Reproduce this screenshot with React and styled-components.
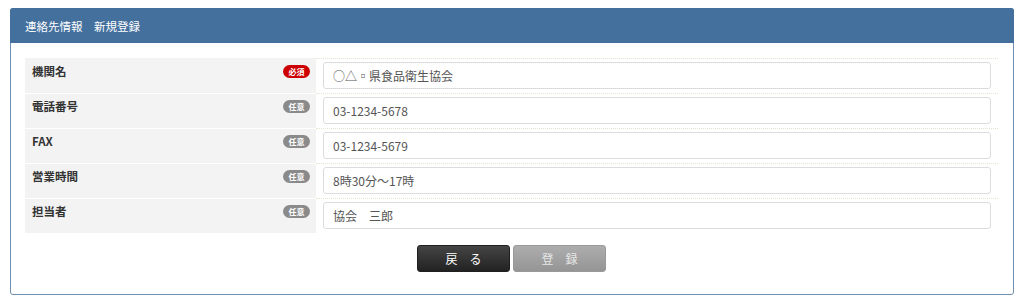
import React from 'react'
import styled, { createGlobalStyle } from 'styled-components'

const GlobalStyle = createGlobalStyle`
  body {
    margin: 0;
    background: #fff;
    font-family: "Noto Sans CJK JP", "Noto Sans", sans-serif;
    color: #333;
  }
`

const Panel = styled.section`
  margin: 8px 10px 0 10px;
  width: 1004px;
  height: 287px;
  box-sizing: border-box;
  border: 1px solid #6f8fb1;
  border-radius: 3px;
  display: flex;
  flex-direction: column;
`
const PanelHeader = styled.header`
  background: #44709e;
  color: #fff;
  font-size: 11.5px;
  height: 35px;
  display: flex;
  align-items: center;
  padding: 0 15px;
  margin: -1px -1px 0 -1px;
  border-radius: 3px 3px 0 0;
`
const PanelBody = styled.div`
  padding: 15px 15px 0 14px;
  display: flex;
  flex-direction: column;
  align-items: stretch;
`
const Table = styled.div`
  display: grid;
  grid-template-columns: 291px 1fr;
`
const LabelCell = styled.div`
  background: #f3f3f3;
  border-top: 1px solid #fff;
  height: 35px;
  box-sizing: border-box;
  padding: 4px 6px 0 7px;
  display: flex;
  align-items: flex-start;
  justify-content: space-between;
  font-size: 11.5px;
  font-weight: 700;
  color: #333;
  &:first-child {
    border-top-color: #f3f3f3;
  }
`
const Badge = styled.span`
  background: ${(p) => (p.$required ? '#cc0000' : '#8a8a8a')};
  color: #fff;
  font-size: 8px;
  font-weight: 700;
  line-height: 13px;
  height: 13px;
  width: 27px;
  text-align: center;
  border-radius: 7px;
  margin-top: 2px;
`
const InputCell = styled.div`
  border-top: 1px dotted #e4e4cf;
  height: 35px;
  box-sizing: border-box;
  padding: 3px 7px 0 7px;
`
const Input = styled.input`
  display: block;
  width: 100%;
  height: 27px;
  box-sizing: border-box;
  border: 1px solid #dcdcdc;
  border-radius: 3px;
  padding: 0 9px;
  font-family: inherit;
  font-size: 12px;
  color: #555;
  background: #fff;
  outline: none;
`
const Actions = styled.div`
  display: flex;
  justify-content: center;
  gap: 3px;
  margin-top: 12px;
`
const Button = styled.button`
  width: 93px;
  height: 27px;
  border-radius: 3px;
  font-family: inherit;
  font-size: 12px;
  cursor: pointer;
  border: 1px solid ${(p) => (p.$primary ? '#1f1f1f' : '#999')};
  background: ${(p) =>
    p.$primary
      ? 'linear-gradient(#454545, #222)'
      : 'linear-gradient(#adadad, #959595)'};
  color: ${(p) => (p.$primary ? '#fff' : '#e6e6e6')};
`

const fields = [
  { label: '機関名', required: true, value: '○△▫県食品衛生協会' },
  { label: '電話番号', value: '03-1234-5678' },
  { label: 'FAX', value: '03-1234-5679' },
  { label: '営業時間', value: '8時30分～17時' },
  { label: '担当者', value: '協会　三郎' },
]

const App = () => {
  return (
    <>
      <GlobalStyle />
      <Panel>
        <PanelHeader>連絡先情報　新規登録</PanelHeader>
        <PanelBody>
          <Table>
            {fields.map((f) => (
              <React.Fragment key={f.label}>
                <LabelCell>
                  {f.label}
                  <Badge $required={f.required}>{f.required ? '必須' : '任意'}</Badge>
                </LabelCell>
                <InputCell>
                  <Input defaultValue={f.value} />
                </InputCell>
              </React.Fragment>
            ))}
          </Table>
          <Actions>
            <Button $primary>戻　る</Button>
            <Button disabled>登　録</Button>
          </Actions>
        </PanelBody>
      </Panel>
    </>
  )
}

export default App
